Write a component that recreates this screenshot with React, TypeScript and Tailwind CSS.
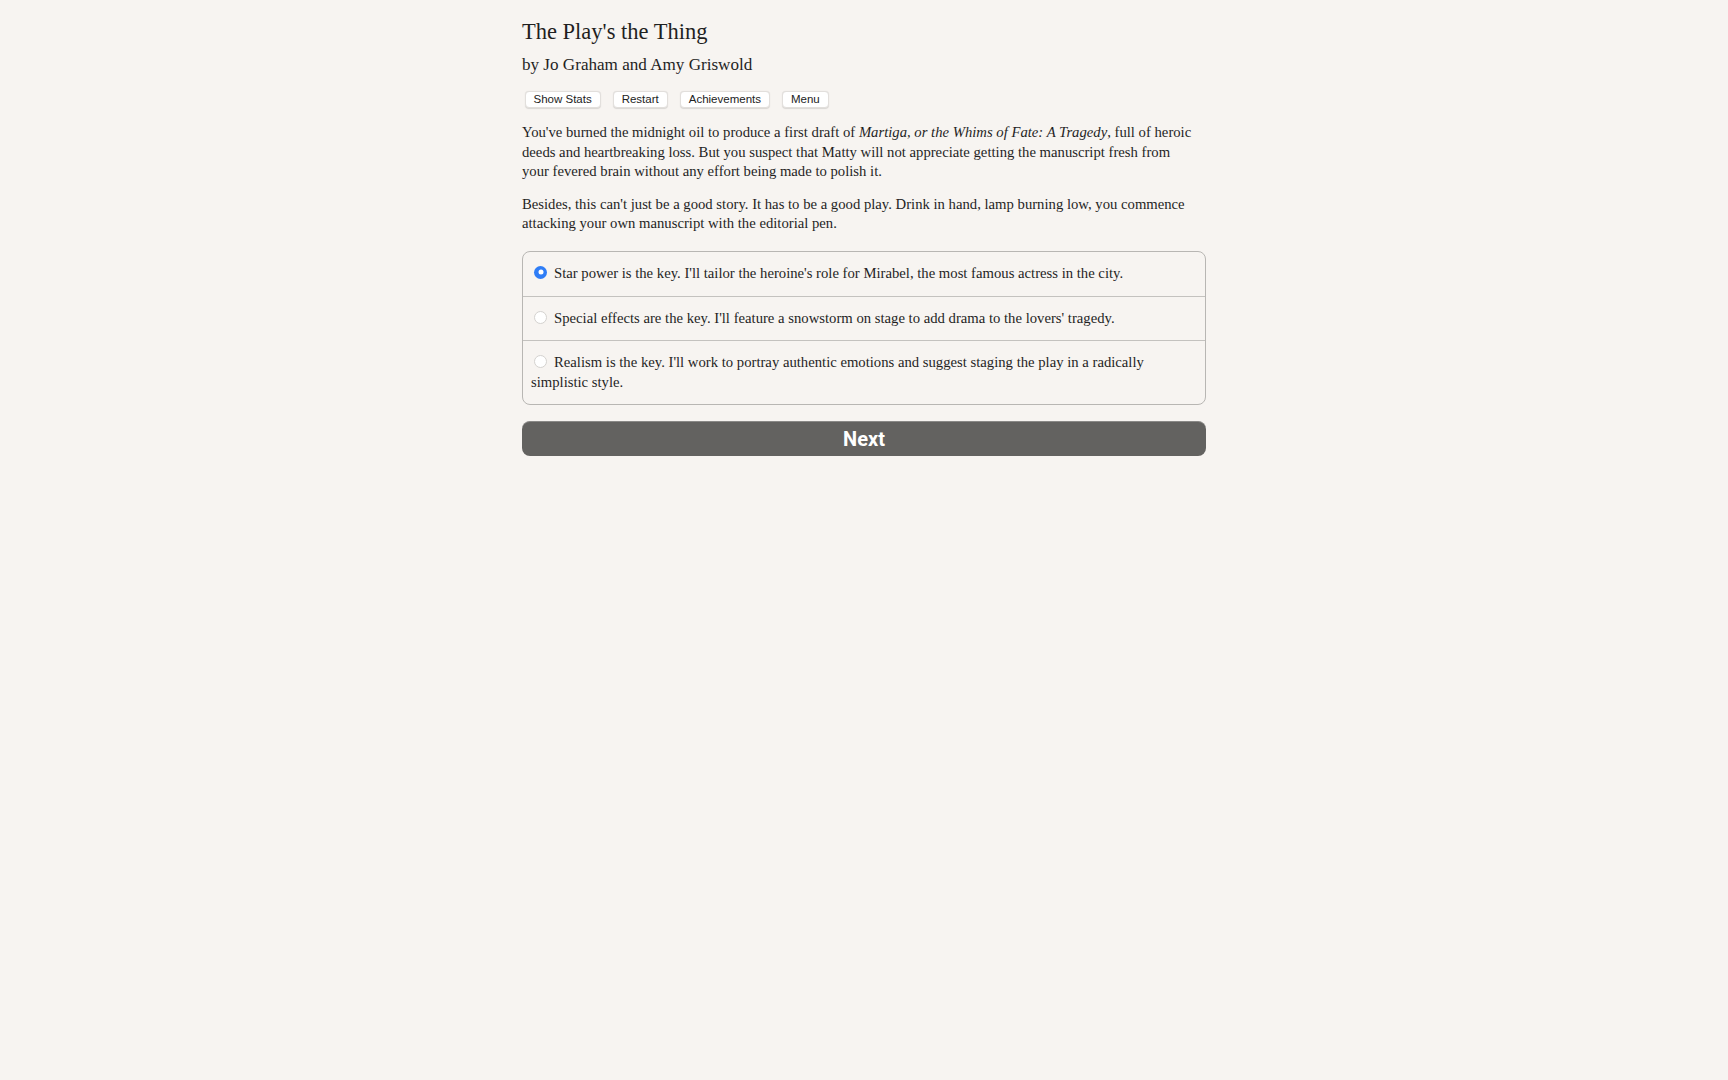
import { useState } from 'react';

const choices = [
  "Star power is the key. I'll tailor the heroine's role for Mirabel, the most famous actress in the city.",
  "Special effects are the key. I'll feature a snowstorm on stage to add drama to the lovers' tragedy.",
  "Realism is the key. I'll work to portray authentic emotions and suggest staging the play in a radically simplistic style.",
];

const App = () => {
  const [picked, setPicked] = useState(0);
  const serif = "font-['Liberation_Serif',serif]";

  return (
    <div className={`min-h-screen bg-[#f7f4f1] text-[#1f1f1f] ${serif}`}>
      <div className="w-[684px] mx-auto pt-[18px]">
        <h1 className="text-[22.5px] leading-[28px]">The Play's the Thing</h1>
        <h2 className="mt-[7px] text-[17.1px] leading-[24px]">by Jo Graham and Amy Griswold</h2>

        <div className="mt-[14px] flex gap-[12px] pl-[2.5px] font-['Liberation_Sans',sans-serif]">
          {['Show Stats', 'Restart', 'Achievements', 'Menu'].map((label) => (
            <button
              key={label}
              className="h-[17px] px-[8px] bg-white rounded-[4px] border border-[#e2dfdc] shadow-[0_0.5px_1px_rgba(0,0,0,0.12)] text-[11.5px] leading-[15px] text-[#222]"
            >
              {label}
            </button>
          ))}
        </div>

        <div className="mt-[15px] text-[14.7px] leading-[19.6px]">
          <p>
            You've burned the midnight oil to produce a first draft of{' '}
            <i>Martiga, or the Whims of Fate: A Tragedy</i>, full of heroic deeds and heartbreaking loss. But you
            suspect that Matty will not appreciate getting the manuscript fresh from
            <br />
            your fevered brain without any effort being made to polish it.
          </p>
          <p className="mt-[13px]">
            Besides, this can't just be a good story. It has to be a good play. Drink in hand, lamp burning low, you
            commence attacking your own manuscript with the editorial pen.
          </p>
        </div>

        <div className="mt-[17px] border-[1.5px] border-[#b8b6b3] rounded-[8px] overflow-hidden">
          {choices.map((text, i) => (
            <label
              key={i}
              onClick={() => setPicked(i)}
              className={`block px-[8px] py-[12px] text-[14.7px] leading-[19.6px] cursor-pointer ${
                i > 0 ? 'border-t-[1.5px] border-[#c4c2bf]' : ''
              }`}
            >
              <span
                className={`inline-block align-[-1px] ml-[3px] mr-[7px] w-[13px] h-[13px] rounded-full ${
                  picked === i
                    ? 'bg-[#2f7df6] border-0 relative'
                    : 'bg-white border border-[#d4d2cf]'
                }`}
              >
                {picked === i && (
                  <span className="absolute left-1/2 top-1/2 -translate-x-1/2 -translate-y-1/2 w-[5px] h-[5px] rounded-full bg-white" />
                )}
              </span>
              {text}
            </label>
          ))}
        </div>

        <button className="mt-[16px] w-full h-[35px] rounded-[8px] bg-[#636260] border-t border-[#8a8987] text-white text-[20px] font-bold font-['Roboto',sans-serif]">
          Next
        </button>
      </div>
    </div>
  );
};

export default App;
